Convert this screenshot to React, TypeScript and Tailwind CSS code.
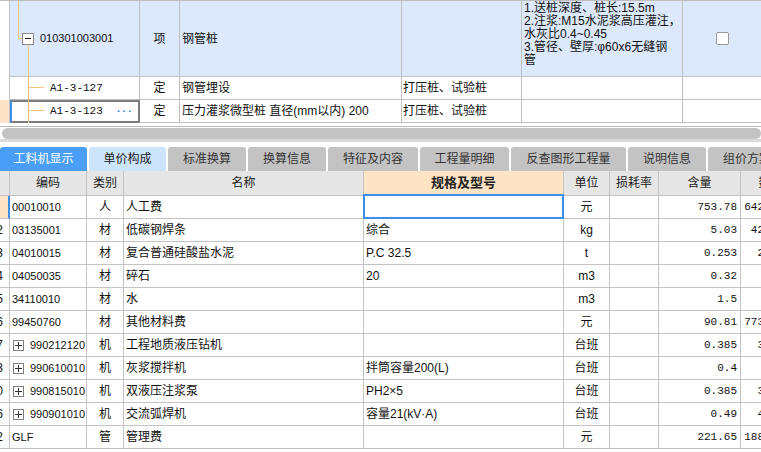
import React from "react";

// lower grid column widths (right border included)
const W = [10, 77, 37, 240, 200, 46, 49, 82, 60];

type Mat = {
  n: string;
  code: string;
  plus?: boolean;
  type: string;
  name: string;
  spec: string;
  unit: string;
  qty: string;
  total: string;
};

const mats: Mat[] = [
  { n: "", code: "00010010", type: "人", name: "人工费", spec: "", unit: "元", qty: "753.78", total: "64221.83" },
  { n: "2", code: "03135001", type: "材", name: "低碳钢焊条", spec: "综合", unit: "kg", qty: "5.03", total: "428.556" },
  { n: "3", code: "04010015", type: "材", name: "复合普通硅酸盐水泥", spec: "P.C 32.5", unit: "t", qty: "0.253", total: "21.556" },
  { n: "4", code: "04050035", type: "材", name: "碎石", spec: "20", unit: "m3", qty: "0.32", total: "27.26" },
  { n: "5", code: "34110010", type: "材", name: "水", spec: "", unit: "m3", qty: "1.5", total: "127.8" },
  { n: "6", code: "99450760", type: "材", name: "其他材料费", spec: "", unit: "元", qty: "90.81", total: "7737.012" },
  { n: "7", code: "990212120", plus: true, type: "机", name: "工程地质液压钻机", spec: "", unit: "台班", qty: "0.385", total: "32.802" },
  { n: "3", code: "990610010", plus: true, type: "机", name: "灰浆搅拌机", spec: "拌筒容量200(L)", unit: "台班", qty: "0.4", total: "34.08" },
  { n: "0", code: "990815010", plus: true, type: "机", name: "双液压注浆泵", spec: "PH2×5", unit: "台班", qty: "0.385", total: "32.802" },
  { n: "6", code: "990901010", plus: true, type: "机", name: "交流弧焊机", spec: "容量21(kV·A)", unit: "台班", qty: "0.49", total: "41.748" },
  { n: "2", code: "GLF", type: "管", name: "管理费", spec: "", unit: "元", qty: "221.65", total: "18884.58" },
];

const tabs = [
  { label: "工料机显示", w: 87, cls: "bg-[#4a9ef6] text-white" },
  { label: "单价构成", w: 77, cls: "bg-[#cce5fb] text-[#222]" },
  { label: "标准换算", w: 78, cls: "bg-[#c3c3c3] text-[#333]" },
  { label: "换算信息", w: 78, cls: "bg-[#c3c3c3] text-[#333]" },
  { label: "特征及内容", w: 90, cls: "bg-[#c3c3c3] text-[#333]" },
  { label: "工程量明细", w: 89, cls: "bg-[#c3c3c3] text-[#333]" },
  { label: "反查图形工程量", w: 115, cls: "bg-[#c3c3c3] text-[#333]" },
  { label: "说明信息", w: 78, cls: "bg-[#c3c3c3] text-[#333]" },
  { label: "组价方案", w: 78, cls: "bg-[#c3c3c3] text-[#333]" },
];

const TopGrid = () => (
  <div className="relative border-t border-[#bdbdbd]">
    {/* 清单行 */}
    <div className="flex h-[76px]">
      <div className="w-[10px] shrink-0 border-r border-[#c0c0c0] bg-white" />
      <div className="w-[130px] shrink-0 flex items-center pl-[12px] border-r border-b border-[#c0c0c0] bg-[#dce8fc]">
        <span className="w-[12px] h-[12px] border border-[#8a8a8a] bg-white flex items-center justify-center">
          <span className="w-[6px] h-px bg-[#222]" />
        </span>
        <span className="ml-[6px] text-[11px]">010301003001</span>
      </div>
      <div className="w-[40px] shrink-0 flex items-center justify-center border-r border-b border-[#c0c0c0] bg-[#dce8fc]">
        项
      </div>
      <div className="w-[222px] shrink-0 flex items-center pl-[2px] border-r border-b border-[#c0c0c0] bg-[#dce8fc]">
        钢管桩
      </div>
      <div className="w-[120px] shrink-0 border-r border-b border-[#c0c0c0] bg-[#dce8fc]" />
      <div className="w-[161px] shrink-0 pl-[2px] pt-[1px] leading-[13px] whitespace-nowrap overflow-hidden border-r border-b border-[#c0c0c0] bg-[#dce8fc]">
        <div>1.送桩深度、桩长:15.5m</div>
        <div>2.注浆:M15水泥浆高压灌注，</div>
        <div>水灰比0.4~0.45</div>
        <div>3.管径、壁厚:φ60x6无缝钢</div>
        <div>管</div>
      </div>
      <div className="flex-1 flex items-center justify-center border-b border-[#c0c0c0] bg-[#dce8fc]">
        <span className="w-[13px] h-[13px] rounded-[2px] border border-[#9a9a9a] bg-white" />
      </div>
    </div>

    {/* 定额行 */}
    <div className="flex h-[23px]">
      <div className="w-[10px] shrink-0 border-r border-[#c0c0c0] bg-white" />
      <div className="w-[130px] shrink-0 flex items-center pl-[40px] border-r border-b border-[#c0c0c0] font-['Liberation_Mono',monospace] text-[11px]">
        A1-3-127
      </div>
      <div className="w-[40px] shrink-0 flex items-center justify-center border-r border-b border-[#c0c0c0]">定</div>
      <div className="w-[222px] shrink-0 flex items-center pl-[2px] border-r border-b border-[#c0c0c0]">钢管埋设</div>
      <div className="w-[120px] shrink-0 flex items-center pl-[1px] border-r border-b border-[#c0c0c0]">打压桩、试验桩</div>
      <div className="w-[161px] shrink-0 border-r border-b border-[#c0c0c0]" />
      <div className="flex-1 border-b border-[#c0c0c0]" />
    </div>
    <div className="flex h-[23px]">
      <div className="w-[10px] shrink-0 border-r border-[#c0c0c0] bg-[#fde4c6]" />
      <div className="w-[130px] shrink-0 flex items-center justify-between pl-[38px] pr-[6px] border-2 border-[#7d7d7d] border-l-[#3c8ee8] font-['Liberation_Mono',monospace] text-[11px]">
        <span>A1-3-123</span>
        <span className="text-[#3c8ee8] font-bold tracking-[-1px]">···</span>
      </div>
      <div className="w-[40px] shrink-0 flex items-center justify-center border-r border-b border-[#c0c0c0]">定</div>
      <div className="w-[222px] shrink-0 flex items-center pl-[2px] whitespace-nowrap border-r border-b border-[#c0c0c0]">
        压力灌浆微型桩 直径(mm以内) 200
      </div>
      <div className="w-[120px] shrink-0 flex items-center pl-[1px] border-r border-b border-[#c0c0c0]">打压桩、试验桩</div>
      <div className="w-[161px] shrink-0 border-r border-b border-[#c0c0c0]" />
      <div className="flex-1 border-b border-[#c0c0c0]" />
    </div>

    {/* tree connector lines */}
    <svg className="absolute left-0 top-0 pointer-events-none" width="140" height="122">
      <g stroke="#f6c57c" strokeWidth="1" fill="none">
        <path d="M18.5 0 V37.5 H22" />
        <path d="M28.5 44 V122" />
        <path d="M28.5 86.5 H44" />
        <path d="M28.5 109.5 H44" />
      </g>
    </svg>
  </div>
);

const ScrollBar = () => (
  <div className="h-[24px] flex flex-col">
    <div className="h-[3px]" />
    <div className="h-px bg-[#bababa]" />
    <div className="h-px" />
    <div className="h-[11px] ml-[2px] rounded-full bg-[#c3c3c3]" />
    <div className="h-[3px] bg-[#dadada]" />
  </div>
);

const Tabs = () => (
  <div className="flex gap-[2px] h-[24px] whitespace-nowrap">
    {tabs.map((t) => (
      <div
        key={t.label}
        style={{ width: t.w }}
        className={`shrink-0 flex items-center justify-center rounded-t-[3px] ${t.cls}`}
      >
        {t.label}
      </div>
    ))}
  </div>
);

const headers = ["", "编码", "类别", "名称", "规格及型号", "单位", "损耗率", "含量", "数量"];

const MaterialGrid = () => (
  <div className="flex flex-col">
    <div className="flex h-[25px]">
      {headers.map((h, i) => (
        <div
          key={i}
          style={{ width: W[i] }}
          className={`shrink-0 flex items-center justify-center border-r border-b border-[#c4c4c4] whitespace-nowrap overflow-hidden ${
            i === 4 ? "bg-[#fde4c4] font-bold text-[13px] text-[#222]" : "bg-[#e6e6e6] text-[#222]"
          }`}
        >
          {h}
        </div>
      ))}
    </div>
    {mats.map((m, r) => (
      <div key={r} className="flex h-[23px]">
        <div
          style={{ width: W[0] }}
          className={`shrink-0 flex items-center justify-end pr-[6px] overflow-hidden border-b border-[#c4c4c4] ${
            r === 0 ? "bg-[#fde4c6] border-r-2 border-r-[#3c8ee8]" : "border-r"
          }`}
        >
          {m.n}
        </div>
        <div style={{ width: W[1] }} className="shrink-0 flex items-center pl-[2px] border-r border-b border-[#c4c4c4] text-[11px] whitespace-nowrap">
          {m.plus && (
            <span className="w-[11px] h-[11px] ml-[1px] mr-[6px] border border-[#7f7f7f] relative flex items-center justify-center">
              <span className="w-[7px] h-px bg-[#333]" />
              <span className="absolute w-px h-[7px] bg-[#333]" />
            </span>
          )}
          {m.code}
        </div>
        <div style={{ width: W[2] }} className="shrink-0 flex items-center justify-center border-r border-b border-[#c4c4c4]">
          {m.type}
        </div>
        <div style={{ width: W[3] }} className="shrink-0 flex items-center pl-[2px] border-r border-b border-[#c4c4c4]">
          {m.name}
        </div>
        <div style={{ width: W[4] }} className="relative shrink-0 flex items-center pl-[2px] border-r border-b border-[#c4c4c4] whitespace-nowrap">
          {m.spec}
          {r === 0 && <div className="absolute -left-px -top-[2px] -right-px -bottom-px border-2 border-[#3c8ee8]" />}
        </div>
        <div style={{ width: W[5] }} className="shrink-0 flex items-center justify-center border-r border-b border-[#c4c4c4]">
          {m.unit}
        </div>
        <div style={{ width: W[6] }} className="shrink-0 border-r border-b border-[#c4c4c4]" />
        <div style={{ width: W[7] }} className="shrink-0 flex items-center justify-end pr-[3px] border-r border-b border-[#c4c4c4] font-['Liberation_Mono',monospace] text-[11px]">
          {m.qty}
        </div>
        <div style={{ width: W[8] }} className="shrink-0 flex items-center justify-end pr-[3px] border-r border-b border-[#c4c4c4] font-['Liberation_Mono',monospace] text-[11px] whitespace-nowrap">
          {m.total}
        </div>
      </div>
    ))}
  </div>
);

export default function App() {
  return (
    <div className="w-[761px] h-[452px] overflow-hidden bg-white text-[12px] text-[#111] font-['Liberation_Sans','Noto_Sans_CJK_SC',sans-serif]">
      <TopGrid />
      <ScrollBar />
      <Tabs />
      <MaterialGrid />
    </div>
  );
}
